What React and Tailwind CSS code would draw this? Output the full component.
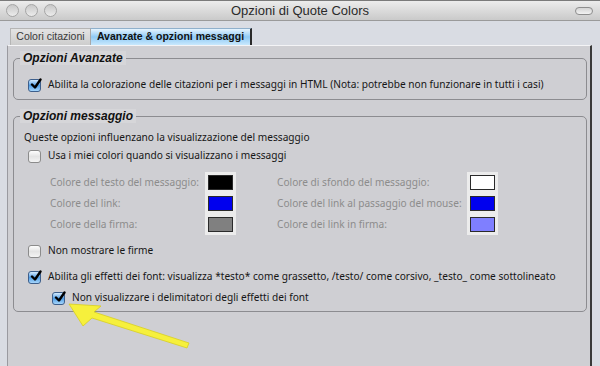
import React from "react";

const font = { fontFamily: '"Liberation Sans", Arial, sans-serif' };
const body = { fontFamily: '"Noto Sans", "Liberation Sans", Arial, sans-serif' };

function Check({ checked }) {
  if (checked) {
    return (
      <span className="relative w-[13px] h-[13px] shrink-0 rounded-[3px] border border-[#3d5f8c] bg-gradient-to-b from-[#d4ebfd] via-[#4f9ee6] to-[#a6d6fb] flex items-center justify-center">
        <svg width="12" height="12" viewBox="0 0 12 12" className="absolute left-[1px] top-[-2px]">
          <path d="M2 6.5 L5 9.5 L10.5 1.5" stroke="#000" strokeWidth="2.4" fill="none" strokeLinecap="round" strokeLinejoin="round" />
        </svg>
      </span>
    );
  }
  return (
    <span className="w-[13px] h-[13px] shrink-0 rounded-[3px] border border-[#8b8b8b] bg-gradient-to-b from-[#fdfdfd] via-[#e4e4e4] to-[#f4f4f4]" />
  );
}

function Swatch({ color }) {
  return (
    <div className="w-[31px] h-[21px] bg-[#ececec] flex items-center justify-center">
      <div className="w-[25px] h-[15px] border border-[#2a2a2a]" style={{ backgroundColor: color }} />
    </div>
  );
}

function Legend({ children }) {
  return (
    <legend className="ml-[1px] px-[3px] h-[14px] leading-[14px] bg-[#d6d6d9] text-[12px] font-bold italic text-[#111]" style={font}>
      {children}
    </legend>
  );
}

export default function App() {
  return (
    <div className="relative w-[600px] h-[366px] bg-[#d9dce3] overflow-hidden flex flex-col text-[10.15px] text-[#161616]" style={body}>
      {/* title bar */}
      <div className="h-[21px] shrink-0 border-t border-[#7a7a7a] border-b border-b-[#9a9a9a] bg-gradient-to-b from-[#ececec] to-[#cacaca] grid grid-cols-[1fr_auto_1fr] items-center">
        <div className="flex items-center gap-[6px] pl-[6px]">
          <span className="w-[13px] h-[13px] rounded-full border border-[#a5a5a5] bg-gradient-to-b from-[#c8c8c8] to-[#ececec]" />
          <span className="w-[13px] h-[13px] rounded-full border border-[#a5a5a5] bg-gradient-to-b from-[#c8c8c8] to-[#ececec]" />
          <span className="w-[13px] h-[13px] rounded-full border border-[#a5a5a5] bg-gradient-to-b from-[#c8c8c8] to-[#ececec]" />
        </div>
        <div className="text-[13px] text-[#2a2a2a]" style={font}>Opzioni di Quote Colors</div>
        <div className="flex justify-end pr-[7px]">
          <span className="w-[18px] h-[8px] rounded-full border border-[#8d8d8d] bg-gradient-to-b from-[#d4d4d4] to-[#f2f2f2]" />
        </div>
      </div>

      {/* tabs */}
      <div className="flex pl-[10px] pt-[6px] h-[24px] shrink-0 items-end" style={font}>
        <div className="h-[17px] w-[80px] flex items-center justify-center bg-gradient-to-b from-[#e4e4e4] to-[#cdcdcd] border-t border-l border-[#b5b5b5] text-[#3a3a3a] text-[10.5px]">
          Colori citazioni
        </div>
        <div className="h-[17px] w-[162px] flex items-center justify-center bg-gradient-to-b from-[#e6f4fe] via-[#8fcaf5] to-[#c8e8fc] border-t border-[#8fb0cc] border-l border-l-[#a8a8a8] border-r-2 border-r-[#2a2a2a] font-bold text-[10.5px] text-[#111]">
          Avanzate &amp; opzioni messaggi
        </div>
      </div>

      {/* panel */}
      <div className="flex-1 ml-[7px] w-[585px] bg-[#cfcfd3] border-l border-[#9a9aa0] border-t border-t-[#f4f4f6] border-r-2 border-r-[#3a3a3a] pl-[5px] pr-[3px] pt-[5px]">
        <fieldset className="border border-[#8c8c90] rounded-[5px] px-[5px] pt-[13px] pb-[7px]">
          <Legend>Opzioni Avanzate</Legend>
          <div className="ml-[9px] h-[14px] flex items-center gap-[7px]">
            <Check checked />
            <span>Abilita la colorazione delle citazioni per i messaggi in HTML (Nota: potrebbe non funzionare in tutti i casi)</span>
          </div>
        </fieldset>

        <fieldset className="mt-[9px] border border-[#8c8c90] rounded-[5px] px-[5px] pt-[8px] pb-[6px]">
          <Legend>Opzioni messaggio</Legend>
          <div className="ml-[5px] h-[14px] flex items-center">Queste opzioni influenzano la visualizzazione del messaggio</div>
          <div className="mt-[4px] ml-[9px] h-[14px] flex items-center gap-[7px]">
            <Check />
            <span>Usa i miei colori quando si visualizzano i messaggi</span>
          </div>
          <div className="mt-[9px] ml-[31px] grid grid-cols-[155px_31px_41px_190px_32px] auto-rows-[21px] items-center text-[#8c8c8c]">
            <span>Colore del testo del messaggio:</span>
            <Swatch color="#000000" />
            <span />
            <span>Colore di sfondo del messaggio:</span>
            <Swatch color="#ffffff" />
            <span>Colore del link:</span>
            <Swatch color="#0000ee" />
            <span />
            <span>Colore del link al passaggio del mouse:</span>
            <Swatch color="#0000ee" />
            <span>Colore della firma:</span>
            <Swatch color="#808080" />
            <span />
            <span>Colore dei link in firma:</span>
            <Swatch color="#7f7fff" />
          </div>
          <div className="mt-[9px] ml-[9px] h-[14px] flex items-center gap-[7px]">
            <Check />
            <span>Non mostrare le firme</span>
          </div>
          <div className="mt-[12px] ml-[9px] h-[14px] flex items-center gap-[7px]">
            <Check checked />
            <span>Abilita gli effetti dei font: visualizza *testo* come grassetto, /testo/ come corsivo, _testo_ come sottolineato</span>
          </div>
          <div className="mt-[7px] ml-[33px] h-[14px] flex items-center gap-[7px]">
            <Check checked />
            <span>Non visualizzare i delimitatori degli effetti dei font</span>
          </div>
        </fieldset>
      </div>

      {/* yellow arrow annotation */}
      <svg className="absolute left-0 top-0 pointer-events-none" width="600" height="366" viewBox="0 0 600 366">
        <polygon
          points="69,304 101,306 94,312 189,343 187,348 92,318 83,326"
          fill="#f6f03c"
          stroke="#d8cf20"
          strokeWidth="0.8"
          strokeLinejoin="round"
        />
      </svg>
    </div>
  );
}
